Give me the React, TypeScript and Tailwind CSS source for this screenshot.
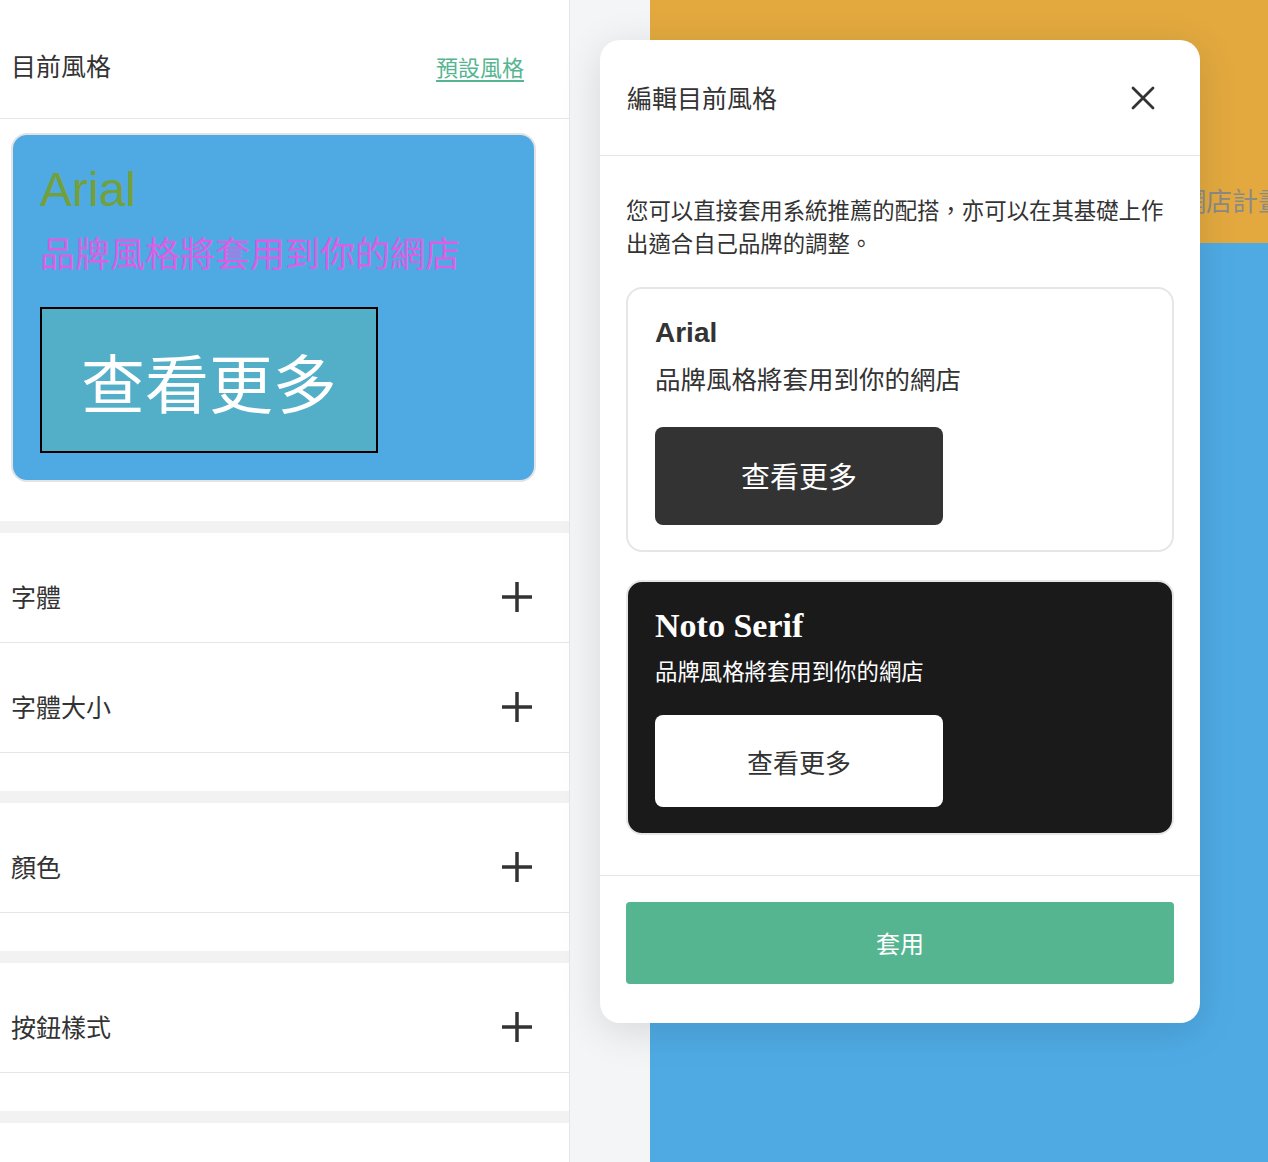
import React from 'react';

const CJK = "font-['Noto_Sans_CJK_TC','Noto_Sans_CJK_SC',sans-serif]";

function PlusIcon() {
  return (
    <svg width="32" height="32" viewBox="0 0 32 32" fill="none">
      <path d="M16 1v30M1 16h30" stroke="#333" strokeWidth="3.5" />
    </svg>
  );
}

function CloseIcon() {
  return (
    <svg width="24" height="24" viewBox="0 0 24 24" fill="none">
      <path d="M2 2l20 20M22 2L2 22" stroke="#333" strokeWidth="2.8" strokeLinecap="round" />
    </svg>
  );
}

function SettingRow({ label }: { label: string }) {
  return (
    <div className="flex h-[110px] items-center justify-between border-b border-[#e6e6e6] pl-[11px] pr-[36px] pt-[19px]">
      <span className="text-[25px] text-[#333]">{label}</span>
      <PlusIcon />
    </div>
  );
}

function Band() {
  return <div className="h-[12px] bg-[#f2f2f2]" />;
}

function StylePanel() {
  return (
    <aside className="w-[570px] shrink-0 border-r border-[#e6e6e6] bg-white">
      <div className="flex h-[119px] items-center justify-between border-b border-[#e6e6e6] pl-[11px] pr-[45px] pt-[14px]">
        <span className="text-[25px] text-[#333]">目前風格</span>
        <a className="text-[22px] text-[#55b590] underline underline-offset-4">預設風格</a>
      </div>

      <div className="pb-[39px] pl-[11px] pr-[33px] pt-[14px]">
        <div className="rounded-[16px] border-2 border-[#e3e3e3] bg-[#4faae4] pb-[27px] pl-[27px] pt-[27px]">
          <div className="font-['Liberation_Sans',sans-serif] text-[48px] leading-[56px] text-[#72a13c]">Arial</div>
          <div className="mt-[10px] text-[35px] leading-[48px] text-[#dc5ee4]">品牌風格將套用到你的網店</div>
          <button className="mt-[31px] flex h-[146px] w-[338px] items-center justify-center border-2 border-black bg-[#53afc7] text-[64px] text-white">
            查看更多
          </button>
        </div>
      </div>
      <Band />

      <SettingRow label="字體" />
      <SettingRow label="字體大小" />
      <div className="h-[38px]" />
      <Band />

      <SettingRow label="顏色" />
      <div className="h-[38px]" />
      <Band />

      <SettingRow label="按鈕樣式" />
      <div className="h-[38px]" />
      <Band />
    </aside>
  );
}

function EditModal() {
  return (
    <div className="absolute left-[600px] top-[40px] w-[600px] rounded-[20px] bg-white shadow-[0_8px_40px_rgba(0,0,0,0.12)]">
      <div className="flex h-[116px] items-center justify-between border-b border-[#e6e6e6] pl-[27px] pr-[45px]">
        <h2 className="text-[25px] text-[#333]">編輯目前風格</h2>
        <CloseIcon />
      </div>

      <div className="px-[26px] pb-[40px] pt-[37px]">
        <p className="text-[22.4px] leading-[33px] text-[#333]">
          您可以直接套用系統推薦的配搭，亦可以在其基礎上作出適合自己品牌的調整。
        </p>

        <div className="mt-[28px] rounded-[16px] border-2 border-[#e6e6e6] bg-white pb-[25px] pl-[27px] pt-[26px]">
          <div className="font-['Liberation_Sans',sans-serif] text-[28px] font-bold leading-[36px] text-[#333]">Arial</div>
          <div className="mt-[9px] text-[25.5px] leading-[36px] text-[#333]">品牌風格將套用到你的網店</div>
          <button className="mt-[31px] flex h-[98px] w-[288px] items-center justify-center rounded-[8px] bg-[#333] text-[29px] text-white">
            查看更多
          </button>
        </div>

        <div className="mt-[28px] rounded-[16px] border-2 border-[#e6e6e6] bg-[#1a1a1a] pb-[26px] pl-[27px] pt-[24px]">
          <div className="font-['Liberation_Serif',serif] text-[34px] font-bold leading-[40px] text-white">Noto Serif</div>
          <div className="mt-[8px] text-[22.4px] leading-[32px] text-white">品牌風格將套用到你的網店</div>
          <button className="mt-[29px] flex h-[92px] w-[288px] items-center justify-center rounded-[8px] bg-white text-[26px] text-[#333]">
            查看更多
          </button>
        </div>
      </div>

      <div className="border-t border-[#e6e6e6] px-[26px] pb-[39px] pt-[26px]">
        <button className="flex h-[82px] w-full items-center justify-center rounded-[4px] bg-[#55b590] text-[24px] text-white">
          套用
        </button>
      </div>
    </div>
  );
}

export default function App() {
  return (
    <div className={`relative flex h-[1162px] w-full overflow-hidden bg-[#f4f5f6] ${CJK}`}>
      <StylePanel />

      <main className="ml-[80px] flex min-w-0 flex-1 flex-col">
        <div className="flex h-[243px] items-end overflow-hidden bg-[#e3a93f] pb-[28px] pl-[374px]">
          <span className="whitespace-nowrap text-[26px] leading-[30px] text-[#8c8a86]">立即開始你的網店計畫</span>
        </div>
        <div className="flex-1 bg-[#4faae4]" />
      </main>

      <EditModal />
    </div>
  );
}
